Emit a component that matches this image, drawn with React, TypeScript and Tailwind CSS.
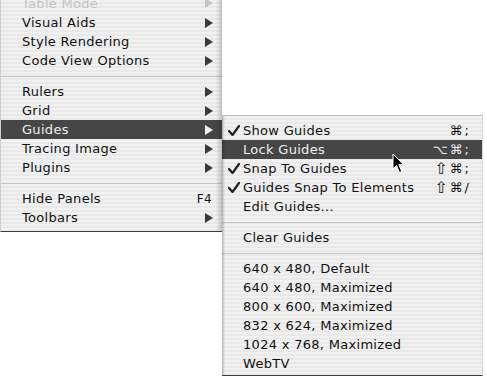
import React from "react";

type Item =
  | { sep: true }
  | {
      label: string;
      arrow?: boolean;
      key?: string;
      active?: boolean;
      checked?: boolean;
      shortcut?: string[];
      faded?: boolean;
    };

const mainMenu: Item[] = [
  { label: "Table Mode", arrow: true, faded: true },
  { label: "Visual Aids", arrow: true },
  { label: "Style Rendering", arrow: true },
  { label: "Code View Options", arrow: true },
  { sep: true },
  { label: "Rulers", arrow: true },
  { label: "Grid", arrow: true },
  { label: "Guides", arrow: true, active: true },
  { label: "Tracing Image", arrow: true },
  { label: "Plugins", arrow: true },
  { sep: true },
  { label: "Hide Panels", key: "F4" },
  { label: "Toolbars", arrow: true },
];

const guidesMenu: Item[] = [
  { label: "Show Guides", checked: true, shortcut: ["⌘", ";"] },
  { label: "Lock Guides", active: true, shortcut: ["⌥", "⌘", ";"] },
  { label: "Snap To Guides", checked: true, shortcut: ["⇧", "⌘", ";"] },
  { label: "Guides Snap To Elements", checked: true, shortcut: ["⇧", "⌘", "/"] },
  { label: "Edit Guides..." },
  { sep: true },
  { label: "Clear Guides" },
  { sep: true },
  { label: "640 x 480, Default" },
  { label: "640 x 480, Maximized" },
  { label: "800 x 600, Maximized" },
  { label: "832 x 624, Maximized" },
  { label: "1024 x 768, Maximized" },
  { label: "WebTV" },
];

const stripes =
  "bg-[repeating-linear-gradient(to_bottom,#f1f1f1_0px,#f1f1f1_2px,#e9e9e9_2px,#e9e9e9_4px)]";

const Arrow = ({ color }: { color: string }) => (
  <svg width="8" height="10" viewBox="0 0 8 10">
    <path d="M0 0 L8 5 L0 10 Z" fill={color} />
  </svg>
);

const Check = ({ white }: { white?: boolean }) => (
  <svg width="12" height="11" viewBox="0 0 12 11">
    <path
      d="M1 6 L4.5 10 L11 1"
      fill="none"
      stroke={white ? "#f2f2f2" : "#222"}
      strokeWidth="2.2"
      strokeLinecap="round"
      strokeLinejoin="round"
    />
  </svg>
);

const Separator = () => (
  <div className="h-[12px] flex items-center">
    <div className="w-full h-px bg-[#c6c6c6]" />
  </div>
);

const Cursor = () => (
  <svg className="absolute left-[170px] top-[37px]" width="13" height="21" viewBox="0 0 13 21">
    <path
      d="M1 1 L1 16 L4.5 12.5 L7.5 19.5 L9.8 18.5 L6.8 11.6 L11.5 11.6 Z"
      fill="#000"
      stroke="#fff"
      strokeWidth="1"
      strokeLinejoin="round"
    />
  </svg>
);

export default function App() {
  return (
    <div className="w-[487px] h-[378px] bg-white flex items-start overflow-hidden font-['DejaVu_Sans',sans-serif] text-[13px] tracking-[0.3px] text-[#111]">
      {/* main View menu, scrolled so Table Mode is cut off */}
      <div className={`relative w-[222px] h-[232px] shrink-0 overflow-hidden border-l border-[#cfcfcf] border-b border-b-[#3c3c3c] ${stripes}`}>
        <div className="flex flex-col -mt-[7px]">
          {mainMenu.map((it, i) =>
            "sep" in it ? (
              <Separator key={i} />
            ) : (
              <div
                key={i}
                className={`h-[19px] flex items-center pl-[21px] pr-[9px] ${
                  it.active ? "bg-[#464646] text-[#efefef]" : ""
                } ${it.faded ? "text-[#c4c4c4]" : ""} ${i === 0 ? "h-[20px]" : ""}`}
              >
                <span className="flex-1 leading-none">{it.label}</span>
                {it.arrow && (
                  <Arrow color={it.active ? "#f2f2f2" : it.faded ? "#c4c4c4" : "#3a3a3a"} />
                )}
                {it.key && <span className="text-[12px] leading-none pr-[1px]">{it.key}</span>}
              </div>
            )
          )}
        </div>
        <div className="absolute right-0 top-0 bottom-0 w-[6px] bg-gradient-to-r from-transparent to-black/20" />
      </div>

      {/* Guides submenu */}
      <div className={`relative mt-[115px] w-[261px] h-[261px] shrink-0 border-t border-[#bdbdbd] border-b border-b-[#3c3c3c] border-r border-r-[#d6d6d6] pt-[5px] ${stripes}`}>
        <div className="flex flex-col">
          {guidesMenu.map((it, i) =>
            "sep" in it ? (
              <Separator key={i} />
            ) : (
              <div
                key={i}
                className={`h-[19px] flex items-center pr-[13px] ${
                  it.active ? "bg-[#464646] text-[#efefef]" : ""
                }`}
              >
                <span className="w-[21px] pl-[6px] flex items-center">
                  {it.checked && <Check white={it.active} />}
                </span>
                <span className="flex-1 leading-none">{it.label}</span>
                {it.shortcut && (
                  <span className="flex items-center gap-[2px] leading-none tracking-normal">
                    {it.shortcut.map((s, j) => (
                      <span key={j} className={s === "⇧" ? "text-[16px]" : ""}>
                        {s}
                      </span>
                    ))}
                  </span>
                )}
              </div>
            )
          )}
        </div>
        <div className="absolute left-0 top-0 bottom-0 w-[3px] bg-gradient-to-r from-black/25 to-transparent" />
        <Cursor />
      </div>
    </div>
  );
}
